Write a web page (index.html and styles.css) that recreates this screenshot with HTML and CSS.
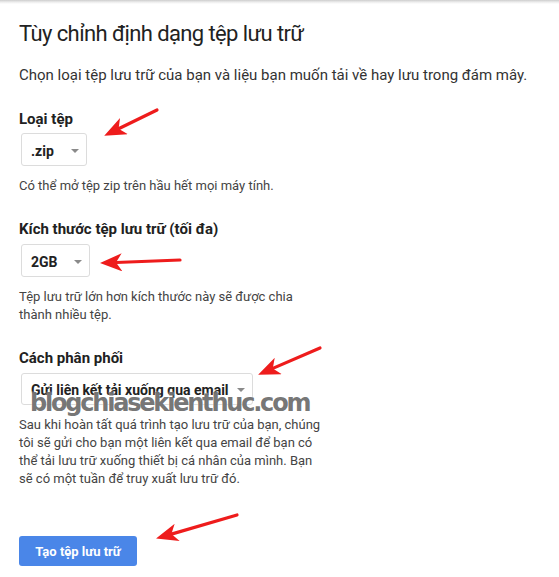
FILE: index.html
```html
<!DOCTYPE html>
<html lang="vi">
<head>
<meta charset="utf-8">
<title>Tùy chỉnh định dạng tệp lưu trữ</title>
<link rel="stylesheet" href="styles.css">
</head>
<body>
<div class="page">
  <h1 class="title">Tùy chỉnh định dạng tệp lưu trữ</h1>
  <p class="intro">Chọn loại tệp lưu trữ của bạn và liệu bạn muốn tải về hay lưu trong đám mây.</p>

  <section class="field field-first">
    <h2 class="label">Loại tệp</h2>
    <div class="select select-zip"><span class="select-text">.zip</span><span class="caret"></span></div>
    <p class="help">Có thể mở tệp zip trên hầu hết mọi máy tính.</p>
  </section>

  <section class="field">
    <h2 class="label">Kích thước tệp lưu trữ (tối đa)</h2>
    <div class="select select-size"><span class="select-text">2GB</span><span class="caret"></span></div>
    <p class="help">Tệp lưu trữ lớn hơn kích thước này sẽ được chia thành nhiều tệp.</p>
  </section>

  <section class="field">
    <h2 class="label">Cách phân phối</h2>
    <div class="select select-delivery"><span class="select-text">Gửi liên kết tải xuống qua email</span><span class="caret"></span></div>
    <p class="help">Sau khi hoàn tất quá trình tạo lưu trữ của bạn, chúng tôi sẽ gửi cho bạn một liên kết qua email để bạn có thể tải lưu trữ xuống thiết bị cá nhân của mình. Bạn sẽ có một tuần để truy xuất lưu trữ đó.</p>
  </section>

  <button class="primary">Tạo tệp lưu trữ</button>
</div>

<div class="watermark">blogchiasekienthuc.com</div>

<svg class="arrows" width="559" height="577" viewBox="0 0 559 577">
  <defs>
    <marker id="head" markerUnits="userSpaceOnUse" markerWidth="22" markerHeight="18" viewBox="0 0 22 18" refX="6" refY="9" orient="auto">
      <path d="M0,0 L22,9 L0,18 L6,9 Z" fill="#ee1c1c"/>
    </marker>
  </defs>
  <g stroke="#ee1c1c" stroke-width="3.2" stroke-linecap="round" fill="none">
    <line x1="157" y1="110" x2="118.6" y2="128.8" marker-end="url(#head)"/>
    <line x1="180" y1="260" x2="116" y2="262.5" marker-end="url(#head)"/>
    <line x1="320" y1="348" x2="272.8" y2="368.4" marker-end="url(#head)"/>
    <line x1="237" y1="515" x2="171.4" y2="534.1" marker-end="url(#head)"/>
  </g>
</svg>
</body>
</html>
```

FILE: styles.css
```css
html, body {
  margin: 0;
  padding: 0;
}
body {
  width: 559px;
  height: 577px;
  overflow: hidden;
  position: relative;
  background: linear-gradient(#cdcdcd 0, #ececec 2px, #ffffff 4px) no-repeat;
  background-color: #fff;
  font-family: Roboto, "Noto Sans", Arial, sans-serif;
  color: #333;
}
.page {
  padding: 20px 19px 0 19px;
}
.title {
  margin: 0;
  font-size: 22px;
  line-height: 28px;
  font-weight: 400;
  letter-spacing: -0.6px;
  color: #222;
}
.intro {
  margin: 17px 0 0 0;
  font-size: 15px;
  line-height: 20px;
  color: #333;
}
.field {
  margin-top: 25px;
}
.label {
  margin: 0;
  font-size: 15px;
  line-height: 18px;
  font-weight: 700;
  color: #212121;
}
.select {
  margin: 6px 0 0 2px;
  display: inline-flex;
  align-items: center;
  box-sizing: border-box;
  height: 33px;
  padding: 2px 7px 0 9px;
  border: 1px solid #dcdcdc;
  border-radius: 3px;
  font-size: 14px;
  font-weight: 700;
  color: #222;
}
.field-first .select {
  margin-top: 5px;
}
.select-zip { width: 66px; }
.select-size { width: 69px; }
.select-delivery { width: 232px; height: 32px; }
.select-text {
  flex: 1;
  line-height: 18px;
  white-space: nowrap;
}
.caret {
  width: 0;
  height: 0;
  border-left: 4px solid transparent;
  border-right: 4px solid transparent;
  border-top: 4px solid #8a8a8a;
}
.help {
  margin: 11px 0 0 0;
  max-width: 306px;
  font-size: 13px;
  line-height: 18px;
  color: #444;
}
.primary {
  display: block;
  margin-top: 48px;
  height: 30px;
  width: 118px;
  padding: 0;
  border: none;
  border-radius: 3px;
  background: #4a86e8;
  color: #fff;
  font-family: Roboto, "Noto Sans", Arial, sans-serif;
  font-size: 13px;
  font-weight: 700;
}
.watermark {
  position: absolute;
  left: 30px;
  top: 389px;
  font-family: "DejaVu Sans", sans-serif;
  font-weight: 700;
  font-size: 24px;
  letter-spacing: -2.2px;
  color: rgba(100, 100, 100, 0.9);
  text-shadow: 0 0 2px rgba(255,255,255,0.9);
  white-space: nowrap;
}
.arrows {
  position: absolute;
  left: 0;
  top: 0;
}
```
